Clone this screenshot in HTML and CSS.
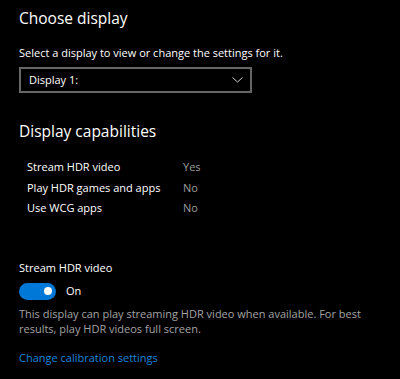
FILE: index.html
```html
<!DOCTYPE html>
<html lang="en">
<head>
    <meta charset="UTF-8">
    <meta name="viewport" content="width=device-width, initial-scale=1.0">
    <title>Display - HDR</title>
    <link rel="stylesheet" href="styles.css">
</head>
<body>
    <div class="page">
        <!-- Выбор дисплея -->
        <h2 class="title">Choose display</h2>
        <p class="hint">Select a display to view or change the settings for it.</p>
        <div class="select">
            <span>Display 1:</span>
            <svg class="chevron" width="11" height="6" viewBox="0 0 11 6">
                <polyline points="0.5,0.5 5.5,5 10.5,0.5" fill="none" stroke="#cfcfcf" stroke-width="1"/>
            </svg>
        </div>

        <!-- Возможности дисплея -->
        <h2 class="title title-caps">Display capabilities</h2>
        <div class="caps">
            <div class="cap-row"><span class="cap-name">Stream HDR video</span><span class="cap-value">Yes</span></div>
            <div class="cap-row"><span class="cap-name">Play HDR games and apps</span><span class="cap-value">No</span></div>
            <div class="cap-row"><span class="cap-name">Use WCG apps</span><span class="cap-value">No</span></div>
        </div>

        <!-- Переключатель -->
        <div class="setting">
            <div class="setting-label">Stream HDR video</div>
            <div class="toggle-row">
                <span class="toggle"><span class="knob"></span></span>
                <span>On</span>
            </div>
            <p class="desc">This display can play streaming HDR video when available. For best<br>results, play HDR videos full screen.</p>
        </div>

        <a class="link" href="#">Change calibration settings</a>
    </div>
</body>
</html>
```

FILE: styles.css
```css
/* Общие стили */
body {
    margin: 0;
    padding: 0;
    background-color: #000000;
    color: #ffffff;
    font-family: "Open Sans", sans-serif;
    font-size: 11px;
    line-height: 16px;
}
.page {
    padding: 8px 19px 0 19px;
}
.title {
    font-size: 15.5px;
    font-weight: normal;
    line-height: 20px;
    margin: 0;
}
.title-caps {
    margin-top: 28px;
}
.hint {
    margin: 17px 0 6px 0;
}
.select {
    width: 214px;
    height: 22px;
    border: 2px solid #666666;
    display: flex;
    align-items: center;
    justify-content: space-between;
    padding: 0 7px 0 8px;
}
.caps {
    margin-top: 16.3px;
    padding-left: 8px;
}
.cap-row {
    display: flex;
    line-height: 20.5px;
}
.cap-name {
    width: 156px;
}
.cap-value {
    color: #9d9d9d;
}
.setting {
    margin-top: 40.8px;
}
.toggle-row {
    display: flex;
    align-items: center;
    gap: 10px;
    margin-top: 7.4px;
}
.toggle {
    width: 37px;
    height: 17px;
    border-radius: 9px;
    background: #0078d7;
    position: relative;
}
.knob {
    position: absolute;
    top: 4.5px;
    right: 4px;
    width: 8px;
    height: 8px;
    border-radius: 50%;
    background: #ffffff;
}
.desc {
    color: #a3a3a3;
    line-height: 15px;
    margin: 6px 0 0 0;
}
.link {
    display: block;
    margin-top: 13.6px;
    color: #1a86d9;
    text-decoration: none;
}
```
